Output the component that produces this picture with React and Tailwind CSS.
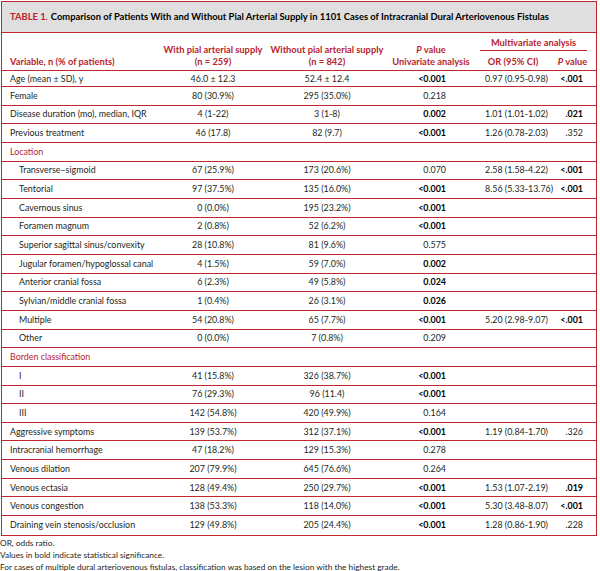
import React from "react";

const RED = "text-[#b8232d]";
const GRID = "grid grid-cols-[160px_102px_126px_82px_82px_41px]";

const rows = [
  { v: "Age (mean ± SD), y", a: "46.0 ± 12.3", b: "52.4 ± 12.4", p: "<0.001", pb: true, or: "0.97 (0.95-0.98)", mp: "<.001", mpb: true, h: "h-[16px]" },
  { v: "Female", a: "80 (30.9%)", b: "295 (35.0%)", p: "0.218" },
  { v: "Disease duration (mo), median, IQR", a: "4 (1-22)", b: "3 (1-8)", p: "0.002", pb: true, or: "1.01 (1.01-1.02)", mp: ".021", mpb: true },
  { v: "Previous treatment", a: "46 (17.8)", b: "82 (9.7)", p: "<0.001", pb: true, or: "1.26 (0.78-2.03)", mp: ".352" },
  { section: "Location" },
  { v: "Transverse–sigmoid", ind: true, a: "67 (25.9%)", b: "173 (20.6%)", p: "0.070", or: "2.58 (1.58-4.22)", mp: "<.001", mpb: true },
  { v: "Tentorial", ind: true, a: "97 (37.5%)", b: "135 (16.0%)", p: "<0.001", pb: true, or: "8.56 (5.33-13.76)", mp: "<.001", mpb: true },
  { v: "Cavernous sinus", ind: true, a: "0 (0.0%)", b: "195 (23.2%)", p: "<0.001", pb: true },
  { v: "Foramen magnum", ind: true, a: "2 (0.8%)", b: "52 (6.2%)", p: "<0.001", pb: true },
  { v: "Superior sagittal sinus/convexity", ind: true, a: "28 (10.8%)", b: "81 (9.6%)", p: "0.575" },
  { v: "Jugular foramen/hypoglossal canal", ind: true, a: "4 (1.5%)", b: "59 (7.0%)", p: "0.002", pb: true },
  { v: "Anterior cranial fossa", ind: true, a: "6 (2.3%)", b: "49 (5.8%)", p: "0.024", pb: true },
  { v: "Sylvian/middle cranial fossa", ind: true, a: "1 (0.4%)", b: "26 (3.1%)", p: "0.026", pb: true },
  { v: "Multiple", ind: true, a: "54 (20.8%)", b: "65 (7.7%)", p: "<0.001", pb: true, or: "5.20 (2.98-9.07)", mp: "<.001", mpb: true },
  { v: "Other", ind: true, a: "0 (0.0%)", b: "7 (0.8%)", p: "0.209" },
  { section: "Borden classification" },
  { v: "I", ind: true, a: "41 (15.8%)", b: "326 (38.7%)", p: "<0.001", pb: true },
  { v: "II", ind: true, a: "76 (29.3%)", b: "96 (11.4)", p: "<0.001", pb: true },
  { v: "III", ind: true, a: "142 (54.8%)", b: "420 (49.9%)", p: "0.164" },
  { v: "Aggressive symptoms", a: "139 (53.7%)", b: "312 (37.1%)", p: "<0.001", pb: true, or: "1.19 (0.84-1.70)", mp: ".326" },
  { v: "Intracranial hemorrhage", a: "47 (18.2%)", b: "129 (15.3%)", p: "0.278" },
  { v: "Venous dilation", a: "207 (79.9%)", b: "645 (76.6%)", p: "0.264" },
  { v: "Venous ectasia", a: "128 (49.4%)", b: "250 (29.7%)", p: "<0.001", pb: true, or: "1.53 (1.07-2.19)", mp: ".019", mpb: true },
  { v: "Venous congestion", a: "138 (53.3%)", b: "118 (14.0%)", p: "<0.001", pb: true, or: "5.30 (3.48-8.07)", mp: "<.001", mpb: true },
  { v: "Draining vein stenosis/occlusion", a: "129 (49.8%)", b: "205 (24.4%)", p: "<0.001", pb: true, or: "1.28 (0.86-1.90)", mp: ".228", last: true },
];

function Row({ r }) {
  const h = r.h || "h-[18.67px]";
  const border = r.last ? "" : "border-b border-[#c1272d]";
  if (r.section) {
    return (
      <div className={`${h} ${border} flex items-center pl-2 ${RED}`}>{r.section}</div>
    );
  }
  return (
    <div className={`${GRID} ${h} ${border} items-center`}>
      <div className={`${r.ind ? "pl-[17px]" : "pl-2"} whitespace-nowrap`}>{r.v}</div>
      <div className="text-center whitespace-nowrap">{r.a}</div>
      <div className="text-center whitespace-nowrap">{r.b}</div>
      <div className={`text-right pr-[26px] ${r.pb ? "font-bold text-black" : ""}`}>{r.p}</div>
      <div className="pl-[13px] whitespace-nowrap">{r.or || ""}</div>
      <div className={`text-right pr-[12px] ${r.mpb ? "font-bold text-black" : ""}`}>{r.mp || ""}</div>
    </div>
  );
}

export default function App() {
  return (
    <div className="w-[600px] h-[571px] bg-white text-[#231f20] font-['Lato',sans-serif] text-[8.9px] leading-[12px]">
      <div className="ml-[1px] mt-[1px] w-[596px] border border-[#c1272d]">
        <div className="h-[31px] bg-[#dfdfdf] border-b border-[#c1272d] flex items-center pl-2 font-bold text-[9.4px] text-black whitespace-nowrap">
          <span className={`${RED} mr-[3px]`}>TABLE 1.</span>
          <span>Comparison of Patients With and Without Pial Arterial Supply in 1101 Cases of Intracranial Dural Arteriovenous Fistulas</span>
        </div>
        <div className={`${GRID} h-[38px] border-b border-[#c1272d] items-end pb-[2px] font-bold text-[9.3px] ${RED}`}>
          <div className="pl-2 whitespace-nowrap">Variable, n (% of patients)</div>
          <div className="text-center whitespace-nowrap">
            <div>With pial arterial supply</div>
            <div>(n = 259)</div>
          </div>
          <div className="text-center whitespace-nowrap">
            <div>Without pial arterial supply</div>
            <div>(n = 842)</div>
          </div>
          <div className="text-center whitespace-nowrap">
            <div><i>P</i> value</div>
            <div>Univariate analysis</div>
          </div>
          <div className="col-span-2 flex flex-col">
            <div className="mx-2 text-center border-b border-[#c1272d] pb-[1px]">Multivariate analysis</div>
            <div className="grid grid-cols-[82px_41px] mt-[5px]">
              <div className="text-center">OR (95% CI)</div>
              <div className="text-center pr-[4px] whitespace-nowrap"><i>P</i> value</div>
            </div>
          </div>
        </div>
        {rows.map((r, i) => (
          <Row key={i} r={r} />
        ))}
      </div>
      <div className="mt-[1px] text-[8.3px] leading-[12px] text-[#231f20]">
        <div>OR, odds ratio.</div>
        <div>Values in bold indicate statistical significance.</div>
        <div>For cases of multiple dural arteriovenous fistulas, classification was based on the lesion with the highest grade.</div>
      </div>
    </div>
  );
}
